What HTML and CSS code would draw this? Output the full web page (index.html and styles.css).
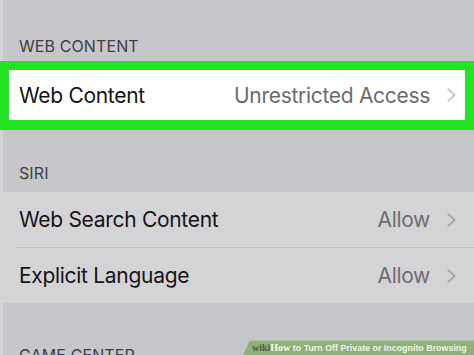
FILE: index.html
```html
<!DOCTYPE html>
<html>
<head>
<meta charset="utf-8">
<link rel="stylesheet" href="styles.css">
</head>
<body>
<div class="screen">
  <div class="group-header first">WEB CONTENT</div>
  <div class="highlight">
    <div class="row white">
      <span class="label">Web Content</span>
      <span class="value">Unrestricted Access</span>
      <svg class="chev" width="9" height="14" viewBox="0 0 9 14"><path d="M1.2 1.2 L7.6 7 L1.2 12.8" fill="none" stroke="#c2c2c5" stroke-width="1.7" stroke-linecap="round" stroke-linejoin="round"/></svg>
    </div>
  </div>
  <div class="group-header siri">SIRI</div>
  <div class="group">
    <div class="row dim">
      <span class="label">Web Search Content</span>
      <span class="value">Allow</span>
      <svg class="chev" width="9" height="14" viewBox="0 0 9 14"><path d="M1.2 1.2 L7.6 7 L1.2 12.8" fill="none" stroke="#a3a3a6" stroke-width="1.7" stroke-linecap="round" stroke-linejoin="round"/></svg>
    </div>
    <div class="sep"></div>
    <div class="row dim">
      <span class="label">Explicit Language</span>
      <span class="value">Allow</span>
      <svg class="chev" width="9" height="14" viewBox="0 0 9 14"><path d="M1.2 1.2 L7.6 7 L1.2 12.8" fill="none" stroke="#a3a3a6" stroke-width="1.7" stroke-linecap="round" stroke-linejoin="round"/></svg>
    </div>
  </div>
  <div class="group-header game">GAME CENTER</div>
  <div class="banner"><span class="wiki">wiki</span><span class="how">How</span> to Turn Off Private or Incognito Browsing</div>
</div>
</body>
</html>
```

FILE: styles.css
```css
html, body {
  margin: 0;
  padding: 0;
}
body {
  width: 474px;
  height: 355px;
  overflow: hidden;
  background: linear-gradient(to right, #d4d4d8 0 3px, #c7c6cb 3px);
  font-family: Inter, "Noto Sans", "Liberation Sans", sans-serif;
}
.screen {
  position: relative;
  width: 474px;
  height: 355px;
  overflow: hidden;
}
.group-header {
  font-size: 16px;
  line-height: 20px;
  color: #3e3e42;
  padding: 0 19px;
  letter-spacing: 0.1px;
}
.group-header.first {
  padding-top: 36px;
  padding-bottom: 5px;
}
.group-header.siri {
  padding-top: 33px;
  padding-bottom: 9px;
}
.group-header.game {
  padding-top: 42px;
}
.highlight {
  border-style: solid;
  border-color: #22e424;
  border-width: 9px 9px 10px 9px;
}
.row {
  display: flex;
  align-items: center;
  font-size: 21px;
  letter-spacing: -0.3px;
  height: 50px;
}
.row.white {
  background: #ffffff;
  padding: 0 9px 0 10px;
}
.row.dim {
  height: 55px;
  background: #d4d4d6;
  padding: 0 18px 0 19px;
}
.label {
  color: #141414;
  flex: 1;
}
.value {
  color: #6c6c70;
  margin-right: 17px;
}
.chev {
  display: block;
  flex: none;
}
.group {
  background: #d4d4d6;
}
.sep {
  height: 1px;
  margin-left: 16px;
  background: #c4c4c7;
}
.banner {
  position: absolute;
  right: 0;
  bottom: 0;
  width: 231px;
  height: 15px;
  background: #8fb07c;
  clip-path: polygon(7px 0, 100% 0, 100% 100%, 0 100%);
  box-sizing: border-box;
  padding-left: 9px;
  font-family: "Liberation Sans", Arial, sans-serif;
  font-weight: bold;
  font-size: 8.9px;
  line-height: 14px;
  color: #eef3e8;
  white-space: nowrap;
  border-top: 1px solid #a9c299;
}
.banner .wiki {
  font-family: "Liberation Serif", serif;
  color: #4f5e3c;
  font-size: 10px;
}
.banner .how {
  font-family: "Liberation Serif", serif;
  font-size: 10px;
  color: #f4f8ef;
}
```
